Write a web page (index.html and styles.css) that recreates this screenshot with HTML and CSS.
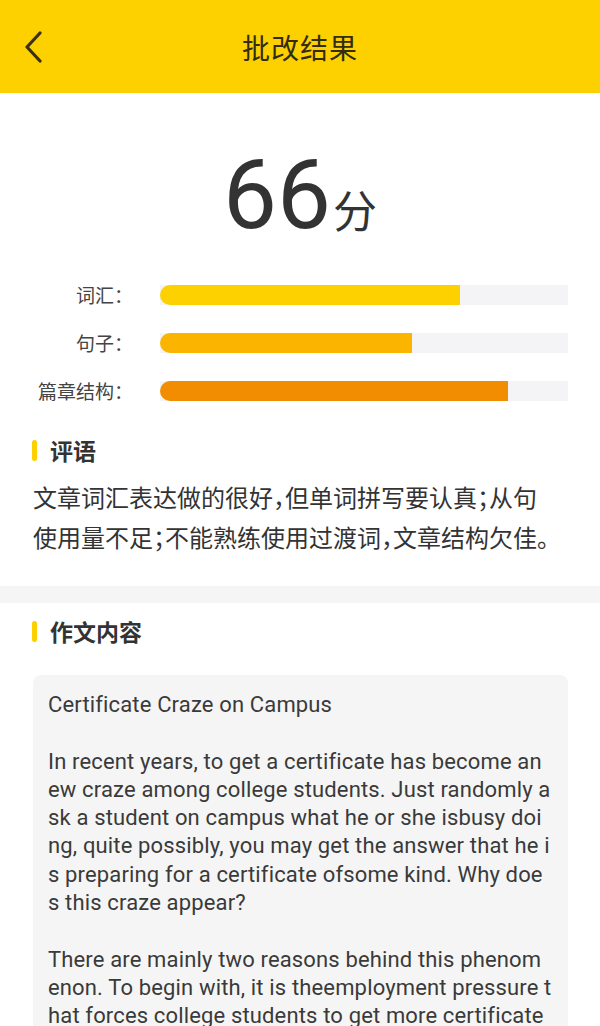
FILE: index.html
```html
<!DOCTYPE html>
<html lang="zh-CN">
<head>
<meta charset="utf-8">
<title>批改结果</title>
<link rel="stylesheet" href="styles.css">
</head>
<body>
<header class="topbar">
  <a class="back" href="#" aria-label="返回">
    <svg width="20" height="32" viewBox="0 0 20 32"><path d="M16 2 L3 16 L16 30" fill="none" stroke="#3b3112" stroke-width="3.2" stroke-linecap="round" stroke-linejoin="round"/></svg>
  </a>
  <h1 class="title">批改结果</h1>
</header>

<section class="panel result">
  <div class="score"><span class="num">66</span><span class="unit">分</span></div>
  <div class="bars">
    <div class="row">
      <span class="label">词汇：</span>
      <div class="track"><div class="fill fill-1" style="width:73.5%"></div></div>
    </div>
    <div class="row">
      <span class="label">句子：</span>
      <div class="track"><div class="fill fill-2" style="width:61.8%"></div></div>
    </div>
    <div class="row">
      <span class="label">篇章结构：</span>
      <div class="track"><div class="fill fill-3" style="width:85.3%"></div></div>
    </div>
  </div>
  <h2 class="heading">评语</h2>
  <p class="comment">文章词汇表达做的很好，但单词拼写要认真；从句使用量不足；不能熟练使用过渡词，文章结构欠佳。</p>
</section>

<div class="gap"></div>

<section class="panel essay">
  <h2 class="heading">作文内容</h2>
  <div class="card">
    <p>Certificate Craze on Campus</p>
    <p>In recent years, to get a certificate has become an<br>ew craze among college students. Just randomly a<br>sk a student on campus what he or she isbusy doi<br>ng, quite possibly, you may get the answer that he i<br>s preparing for a certificate ofsome kind. Why doe<br>s this craze appear?</p>
    <p>There are mainly two reasons behind this phenom<br>enon. To begin with, it is theemployment pressure t<br>hat forces college students to get more certificate<br>s. In today's society, the competition in the job m</p>
  </div>
</section>
</body>
</html>
```

FILE: styles.css
```css
* { box-sizing: border-box; }
html, body { margin: 0; padding: 0; }
body {
  background: #ffffff;
  font-family: "Noto Sans CJK SC", "Noto Sans", sans-serif;
  color: #333333;
}

.topbar {
  height: 93px;
  background: #fdd000;
  display: flex;
  align-items: center;
  justify-content: center;
  position: relative;
}
.back {
  position: absolute;
  left: 24px;
  top: 31px;
  display: block;
  width: 20px;
  height: 32px;
}
.back svg { display: block; }
.title {
  margin: 0;
  font-size: 28px;
  font-weight: 400;
  color: #332c10;
  line-height: 36px;
  letter-spacing: 1px;
}

.panel { background: #ffffff; }

.result { padding: 52px 0 29px; }

.score {
  display: flex;
  justify-content: center;
  align-items: baseline;
  height: 100px;
  line-height: 100px;
}
.num {
  font-family: Roboto, "Noto Sans", sans-serif;
  font-size: 96px;
  color: #333333;
}
.unit {
  font-size: 44px;
  margin-left: 2px;
  color: #333333;
}

.bars {
  margin-top: 38px;
  display: flex;
  flex-direction: column;
  gap: 24px;
}
.row {
  display: flex;
  align-items: center;
  height: 24px;
  padding-right: 32px;
}
.label {
  width: 133px;
  text-align: right;
  font-size: 19px;
  line-height: 24px;
  color: #444444;
  flex: none;
}
.track {
  margin-left: 27px;
  flex: 1;
  height: 20px;
  background: #f4f4f6;
}
.fill {
  height: 100%;
  border-radius: 10px 0 0 10px;
}
.fill-1 { background: #fdd000; }
.fill-2 { background: #fbb400; }
.fill-3 { background: #f28c00; }

.heading {
  margin: 31px 0 0 32px;
  display: flex;
  align-items: center;
  gap: 13px;
  font-size: 23px;
  font-weight: 700;
  line-height: 32px;
  color: #333333;
}
.heading::before {
  content: "";
  width: 5px;
  height: 21px;
  border-radius: 3px;
  background: #fdd000;
}

.comment {
  margin: 11px 47px 0 33px;
  font-size: 24px;
  line-height: 40px;
  color: #333333;
  font-feature-settings: "halt";
}

.gap { height: 17px; background: #f5f5f5; }

.essay { padding: 12px 0 20px; }
.essay .heading { margin-top: 0; }

.card {
  margin: 28px 32px 0 33px;
  background: #f5f5f5;
  border-radius: 8px;
  padding: 16px 15px 20px;
  font-family: Roboto, "Noto Sans", sans-serif;
  font-size: 22px;
  line-height: 28.3px;
  letter-spacing: 0.15px;
  color: #3a3a3a;
  white-space: nowrap;
  overflow: hidden;
}
.card p { margin: 0 0 28.3px; }
.card p:last-child { margin-bottom: 0; }
```
